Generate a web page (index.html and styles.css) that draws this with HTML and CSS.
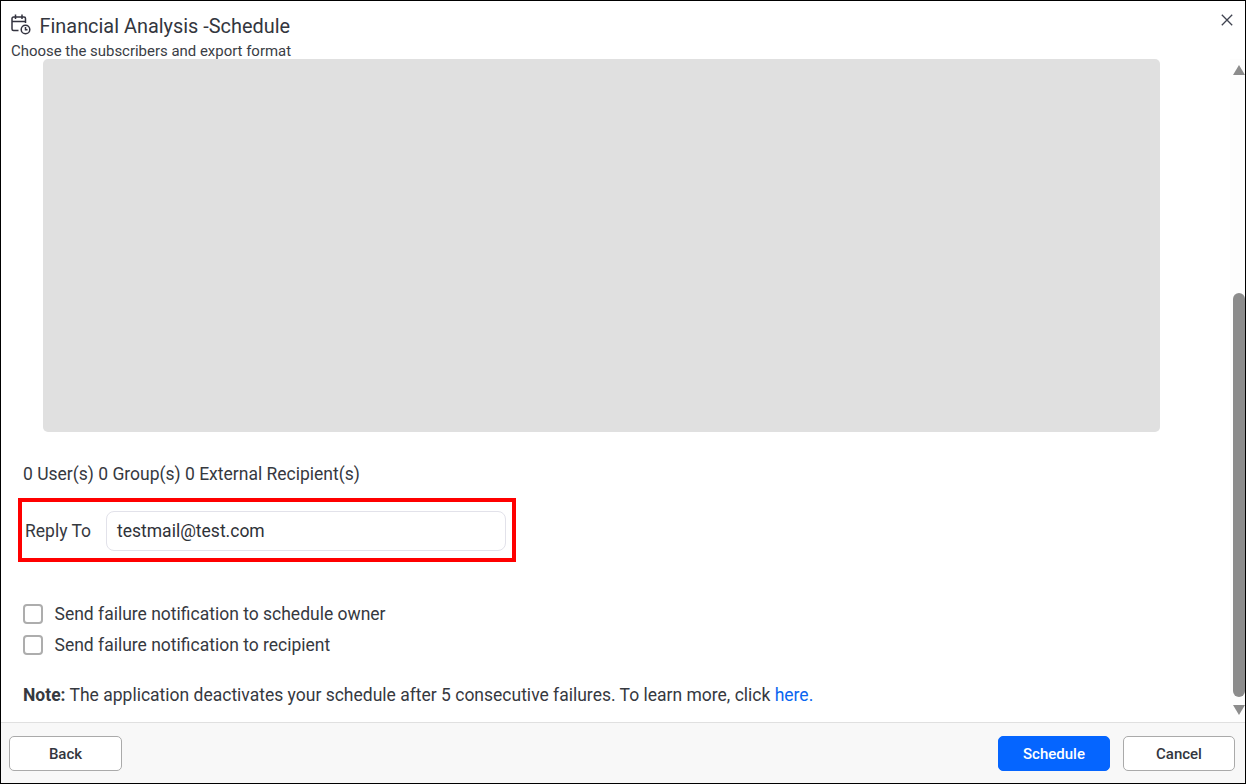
FILE: index.html
```html
<!DOCTYPE html>
<html lang="en">
<head>
<meta charset="utf-8">
<title>Financial Analysis - Schedule</title>
<link rel="stylesheet" href="styles.css">
</head>
<body>
<div class="dialog">
  <header class="head">
    <div class="title-row">
      <svg class="cal-icon" width="20" height="21" viewBox="0 0 20 21" fill="none" stroke="#33333f" stroke-width="1.500">
        <path d="M7.500 16.500H2.500a1.500 1.500 0 0 1-1.500-1.500V4.500A1.500 1.500 0 0 1 2.500 3h10.500a1.500 1.500 0 0 1 1.500 1.500V9"/>
        <path d="M1 7.500h13.500M4.500 0.500v4.500M11 0.500v4.500"/>
        <circle cx="14.500" cy="15.500" r="4.300"/>
        <path d="M14.500 13v2.800h2"/>
      </svg>
      <span class="title">Financial Analysis -Schedule</span>
    </div>
    <div class="subtitle">Choose the subscribers and export format</div>
    <svg class="close" width="12" height="12" viewBox="0 0 12 12" stroke="#3f4350" stroke-width="1.300"><path d="M0.800 0.800L11.200 11.200M11.200 0.800L0.800 11.200"/></svg>
  </header>
  <div class="body">
    <main class="content">
      <div class="placeholder"></div>
      <div class="counts">0 User(s) 0 Group(s) 0 External Recipient(s)</div>
      <div class="reply">
        <label class="reply-label">Reply To</label>
        <div class="reply-input">testmail@test.com</div>
      </div>
      <div class="checks">
        <div class="check"><span class="box"></span><span>Send failure notification to schedule owner</span></div>
        <div class="check"><span class="box"></span><span>Send failure notification to recipient</span></div>
      </div>
      <p class="note"><b>Note:</b> The application deactivates your schedule after 5 consecutive failures. To learn more, click <a href="#">here.</a></p>
    </main>
    <div class="scroll">
      <span class="arrow up"></span>
      <div class="track"><div class="thumb"></div></div>
      <span class="arrow down"></span>
    </div>
  </div>
  <footer class="foot">
    <button class="btn">Back</button>
    <div class="foot-right">
      <button class="btn primary">Schedule</button>
      <button class="btn cancel">Cancel</button>
    </div>
  </footer>
</div>
</body>
</html>
```
FILE: styles.css
```css
* { box-sizing: border-box; }
html, body { margin: 0; height: 100%; }
body { font-family: Roboto, "Liberation Sans", sans-serif; color: #36393f; background: #fff; }
.dialog { width: 1246px; height: 784px; border: 1px solid #000; display: flex; flex-direction: column; overflow: hidden; }
.head { position: relative; height: 58px; padding: 12px 0 0 10px; flex: none; }
.title-row { display: flex; align-items: flex-start; gap: 9px; height: 28px; }
.cal-icon { flex: none; margin-top: 1px; }
.title { font-size: 19.900px; line-height: 28px; color: #33363e; margin-left: -0.500px; }
.subtitle { font-size: 14.950px; line-height: 20px; color: #3a3d45; }
.close { position: absolute; top: 13px; right: 12px; }
.body { flex: 1; display: flex; min-height: 0; }
.content { flex: 1; padding: 0 0 0 22px; min-width: 0; }
.placeholder { width: 1117px; height: 373px; margin-left: 20px; background: #e0e0e0; border-radius: 5px; }
.counts { font-size: 17.500px; line-height: 20px; margin-top: 32px; }
.reply { display: flex; align-items: center; width: 498px; height: 64px; margin: 14px 0 0 -5px; border: 4px solid #f00; padding: 2px 0 0 3px; }
.reply-label { font-size: 17.500px; width: 81px; flex: none; }
.reply-input { width: 400px; height: 40px; border: 1px solid #e2e2ea; border-radius: 8px; padding-left: 10px; font-size: 17.500px; line-height: 38px; color: #2f3238; }
.checks { margin-top: 42px; display: flex; flex-direction: column; gap: 11px; }
.check { display: flex; align-items: center; gap: 11.500px; font-size: 17.500px; line-height: 20px; }
.box { width: 20px; height: 20px; border: 2px solid #adadad; border-radius: 4px; flex: none; background: #fff; }
.note { margin: 30px 0 0; font-size: 17.500px; line-height: 20px; }
.note a { color: #0a66f0; text-decoration: none; }
.scroll { width: 15px; flex: none; display: flex; flex-direction: column; align-items: center; background: #fdfdfd; padding: 6px 0 7px; }
.arrow { width: 0; height: 0; border-left: 6.500px solid transparent; border-right: 6.500px solid transparent; flex: none; margin-left: 3px; }
.arrow.up { border-bottom: 10px solid #8c8c8c; }
.arrow.down { border-top: 10px solid #8c8c8c; }
.track { flex: 1; width: 100%; display: flex; justify-content: flex-end; align-items: flex-end; padding-bottom: 8px; }
.thumb { width: 12px; height: 404px; background: #8c8c8c; border-radius: 6px; }
.foot { height: 61px; flex: none; display: flex; align-items: center; justify-content: space-between; padding: 0 10px 0 8px; background: #f8f8f8; border-top: 1px solid #e0e0e0; }
.foot-right { display: flex; gap: 13px; }
.btn { width: 113px; height: 35px; background: #fff; border: 1px solid #aaa; border-radius: 5px; font: 500 15px Roboto, sans-serif; color: #33363e; padding: 2px 0 0; }
.btn.cancel { width: 112px; }
.btn.primary { width: 112px; background: #0565ff; border-color: #0565ff; color: #fff; }
```
